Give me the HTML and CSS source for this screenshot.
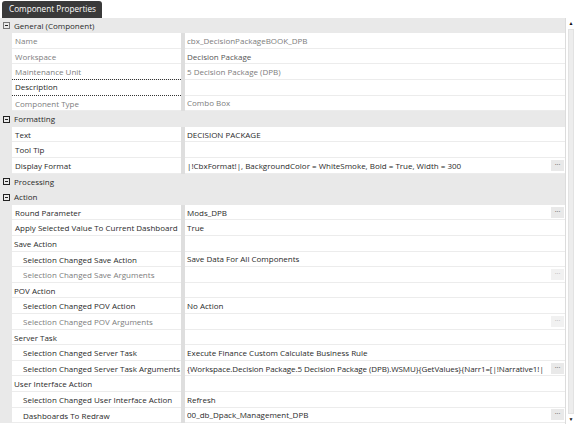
FILE: index.html
```html
<!DOCTYPE html>
<html lang="en">
<head>
    <meta charset="UTF-8">
    <title>Component Properties</title>
    <link rel="stylesheet" href="styles.css">
</head>
<body>
    <div class="panel">
        <div class="tab">Component Properties</div>

        <div class="grid-wrap">
            <div class="grid">
                <!-- General -->
                <div class="row cat">
                    <span class="gut"><svg class="exp" viewBox="0 0 7 7"><rect x="0.5" y="0.5" width="6" height="6" fill="none" stroke="#777"/><path d="M2 3.5h3" stroke="#222"/></svg></span>
                    <span class="cat-label">General (Component)</span>
                </div>
                <div class="row"><span class="gut"></span><span class="name dim">Name</span><span class="sep"></span><span class="val dim">cbx_DecisionPackageBOOK_DPB</span></div>
                <div class="row"><span class="gut"></span><span class="name dim">Workspace</span><span class="sep"></span><span class="val mid">Decision Package</span></div>
                <div class="row"><span class="gut"></span><span class="name dim">Maintenance Unit</span><span class="sep"></span><span class="val dim">5 Decision Package (DPB)</span></div>
                <div class="row"><span class="gut"></span><span class="name focus">Description</span><span class="sep"></span><span class="val"></span></div>
                <div class="row"><span class="gut"></span><span class="name dim">Component Type</span><span class="sep"></span><span class="val dim">Combo Box</span></div>

                <!-- Formatting -->
                <div class="row cat">
                    <span class="gut"><svg class="exp" viewBox="0 0 7 7"><rect x="0.5" y="0.5" width="6" height="6" fill="none" stroke="#222"/><path d="M2 3.5h3" stroke="#222"/></svg></span>
                    <span class="cat-label">Formatting</span>
                </div>
                <div class="row"><span class="gut"></span><span class="name">Text</span><span class="sep"></span><span class="val">DECISION PACKAGE</span></div>
                <div class="row"><span class="gut"></span><span class="name">Tool Tip</span><span class="sep"></span><span class="val"></span></div>
                <div class="row"><span class="gut"></span><span class="name">Display Format</span><span class="sep"></span><span class="val"><span class="txt">|!CbxFormat!|, BackgroundColor = WhiteSmoke, Bold = True, Width = 300</span><span class="more">···</span></span></div>

                <!-- Processing -->
                <div class="row cat">
                    <span class="gut"><svg class="exp" viewBox="0 0 7 7"><rect x="0.5" y="0.5" width="6" height="6" fill="none" stroke="#222"/><path d="M2 3.5h3" stroke="#222"/></svg></span>
                    <span class="cat-label">Processing</span>
                </div>

                <!-- Action -->
                <div class="row cat">
                    <span class="gut"><svg class="exp" viewBox="0 0 7 7"><rect x="0.5" y="0.5" width="6" height="6" fill="none" stroke="#222"/><path d="M2 3.5h3" stroke="#222"/></svg></span>
                    <span class="cat-label">Action</span>
                </div>
                <div class="row"><span class="gut"></span><span class="name">Round Parameter</span><span class="sep"></span><span class="val"><span class="txt">Mods_DPB</span><span class="more">···</span></span></div>
                <div class="row"><span class="gut"></span><span class="name">Apply Selected Value To Current Dashboard</span><span class="sep"></span><span class="val">True</span></div>

                <div class="row sub"><span class="gut"></span><span class="name">Save Action</span><span class="sep"></span><span class="val"></span></div>
                <div class="row"><span class="gut"></span><span class="name lvl2">Selection Changed Save Action</span><span class="sep"></span><span class="val">Save Data For All Components</span></div>
                <div class="row"><span class="gut"></span><span class="name lvl2 dim">Selection Changed Save Arguments</span><span class="sep"></span><span class="val"><span class="txt"></span><span class="more off">···</span></span></div>

                <div class="row sub"><span class="gut"></span><span class="name">POV Action</span><span class="sep"></span><span class="val"></span></div>
                <div class="row"><span class="gut"></span><span class="name lvl2">Selection Changed POV Action</span><span class="sep"></span><span class="val">No Action</span></div>
                <div class="row"><span class="gut"></span><span class="name lvl2 dim">Selection Changed POV Arguments</span><span class="sep"></span><span class="val"><span class="txt"></span><span class="more off">···</span></span></div>

                <div class="row sub"><span class="gut"></span><span class="name">Server Task</span><span class="sep"></span><span class="val"></span></div>
                <div class="row"><span class="gut"></span><span class="name lvl2">Selection Changed Server Task</span><span class="sep"></span><span class="val">Execute Finance Custom Calculate Business Rule</span></div>
                <div class="row"><span class="gut"></span><span class="name lvl2">Selection Changed Server Task Arguments</span><span class="sep"></span><span class="val"><span class="txt tight">{Workspace.Decision Package.5 Decision Package (DPB).WSMU}{GetValues}{Narr1=[|!Narrative1!|</span><span class="more">···</span></span></div>

                <div class="row sub"><span class="gut"></span><span class="name">User Interface Action</span><span class="sep"></span><span class="val"></span></div>
                <div class="row"><span class="gut"></span><span class="name lvl2">Selection Changed User Interface Action</span><span class="sep"></span><span class="val">Refresh</span></div>
                <div class="row"><span class="gut"></span><span class="name lvl2">Dashboards To Redraw</span><span class="sep"></span><span class="val"><span class="txt">00_db_Dpack_Management_DPB</span><span class="more">···</span></span></div>
            </div>

            <div class="scrollbar">
                <span class="arrow">▲</span>
                <span class="thumb"></span>
                <span class="arrow">▼</span>
            </div>
        </div>
    </div>
</body>
</html>
```

FILE: styles.css
```css
body {
    margin: 0;
    background: #fff;
    font-family: "Open Sans", "Noto Sans", sans-serif;
    font-size: 8px;
    color: #2a2a2a;
}

.panel {
    width: 576px;
    height: 424px;
    display: flex;
    flex-direction: column;
    overflow: hidden;
}

.tab {
    align-self: flex-start;
    margin: 1px 0 0 2px;
    height: 16.7px;
    line-height: 16px;
    padding: 0 6px 0 7px;
    background: #3a3a3a;
    color: #fff;
    font-size: 8.2px;
    border-radius: 3px 3px 0 0;
}

.grid-wrap {
    flex: 1;
    display: flex;
    min-height: 0;
}

.grid {
    width: 565px;
    border-right: 1px solid #dcdcdc;
    display: flex;
    flex-direction: column;
    overflow: hidden;
}

.row {
    flex: none;
    display: flex;
    height: 15.6px;
    line-height: 15px;
    white-space: nowrap;
}

.gut {
    width: 12px;
    flex: none;
    background: #e9e9e9;
    display: flex;
    align-items: center;
    justify-content: center;
}

.name {
    width: 169px;
    flex: none;
    box-sizing: border-box;
    padding-left: 3px;
    border-bottom: 1px solid #ececec;
    overflow: hidden;
}

.name.lvl2 {
    padding-left: 11px;
}

.name.focus {
    border-top: 1px dotted #333;
    border-bottom: 1px dotted #333;
    margin-top: -1px;
    line-height: 14px;
}

.sep {
    width: 4px;
    flex: none;
    background: #dedede;
}

.val {
    flex: 1;
    min-width: 0;
    display: flex;
    align-items: center;
    box-sizing: border-box;
    padding-left: 2px;
    border-bottom: 1px solid #ececec;
    overflow: hidden;
}

.val .txt {
    flex: 1;
    min-width: 0;
    overflow: hidden;
}

.val .txt.tight {
    letter-spacing: -0.08px;
}

.dim {
    color: #7d7d7d;
}

.mid {
    color: #555;
}

.more {
    flex: none;
    width: 13px;
    height: 11px;
    margin: 0 1px 0 3px;
    background: #e9e9e9;
    color: #444;
    font-size: 7px;
    line-height: 10px;
    text-align: center;
}

.more.off {
    color: #aaa;
    background: #f1f1f1;
}

.row.cat {
    background: #e9e9e9;
}

.cat-label {
    padding-left: 2px;
}

.exp {
    width: 7px;
    height: 7px;
}

.row.sub .name {
    padding-left: 2px;
}

.scrollbar {
    width: 10px;
    display: flex;
    flex-direction: column;
    align-items: center;
    background: #fff;
}

.arrow {
    font-size: 5px;
    line-height: 7px;
    color: #111;
    margin-top: 2px;
}

.arrow:last-child {
    margin: 0 0 1px;
}

.thumb {
    flex: 1;
    width: 6px;
    margin: 2px 0;
    background: #ededed;
    border: 1px solid #e2e2e2;
    box-sizing: border-box;
}
```
